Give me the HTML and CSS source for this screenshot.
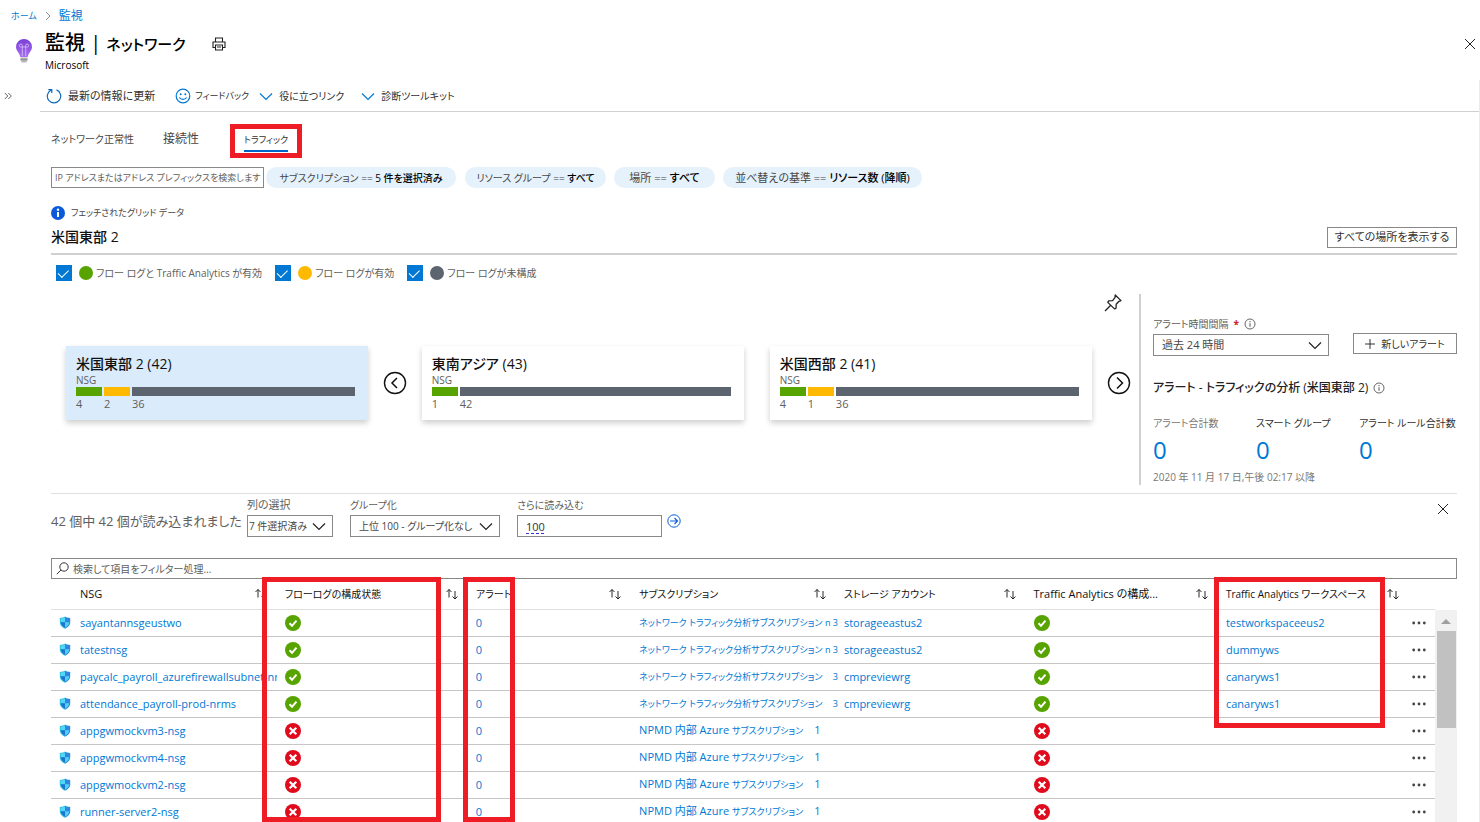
FILE: index.html
```html
<!DOCTYPE html>
<html lang="ja">
<head>
<meta charset="utf-8">
<title>監視 | ネットワーク</title>
<link rel="stylesheet" href="styles.css">
</head>
<body>
<svg class="defs" aria-hidden="true">
  <defs>
    <linearGradient id="bulb-fill" x1="0" y1="0" x2="0" y2="1"><stop offset="0" stop-color="#7a3fd6"/><stop offset="1" stop-color="#a76ff0"/></linearGradient>
    <symbol id="chevron" viewBox="0 0 14 14"><path d="M1 4.500l6 6 6-6" fill="none" stroke="currentColor" stroke-width="1.200"/></symbol>
    <symbol id="close" viewBox="0 0 12 12"><path d="M1 1l10 10M11 1L1 11" fill="none" stroke="currentColor" stroke-width="1"/></symbol>
    <symbol id="info" viewBox="0 0 12 12"><circle cx="6" cy="6" r="5" fill="none" stroke="currentColor" stroke-width=".9"/><path d="M6 5.200v3.600M6 3v1.200" stroke="currentColor" stroke-width="1"/></symbol>
    <symbol id="sort" viewBox="0 0 14 12"><path d="M4 9.500V1.500M1.500 4L4 1.500 6.500 4M10 3V11M7.500 8.500L10 11l2.500-2.500" fill="none" stroke="currentColor" stroke-width=".9"/></symbol>
    <symbol id="shield" viewBox="0 0 12 13"><path d="M6 .5C4.500 1.500 3 1.900.8 2v4.200C.8 9.500 3.500 11.500 6 12.800z" fill="#32bedd"/><path d="M6 .5C7.500 1.500 9 1.900 11.200 2v4.200c0 3.300-2.700 5.300-5.200 6.600z" fill="#2a8ce0"/><path d="M6 1.500C4.800 2.200 3.300 2.700 1.700 2.800v3.500H6z" fill="#50d8f6"/><path d="M6 6.300H1.700C1.800 9 4 10.600 6 11.700z" fill="#1c74d0"/><path d="M6 1.500c1.200.7 2.700 1.200 4.300 1.300v3.500H6z" fill="#2f86e4"/><path d="M6 6.300h4.300C10.200 9 8 10.600 6 11.700z" fill="#50d0f6"/></symbol>
    <symbol id="ok" viewBox="0 0 16 16"><circle cx="8" cy="8" r="8" fill="#57a300"/><path d="M4.500 8.300l2.500 2.500 4.500-5.200" fill="none" stroke="#fff" stroke-width="2"/></symbol>
    <symbol id="bad" viewBox="0 0 16 16"><circle cx="8" cy="8" r="8" fill="#e00b1c"/><path d="M4.700 4.700l6.600 6.600M11.300 4.700l-6.600 6.600" fill="none" stroke="#fff" stroke-width="2.200"/></symbol>
    <symbol id="dots" viewBox="0 0 14 4"><circle cx="1.700" cy="2" r="1.400"/><circle cx="7" cy="2" r="1.400"/><circle cx="12.300" cy="2" r="1.400"/></symbol>
  </defs>
</svg>
<div class="page">
  <nav class="crumbs"><a href="#">ホーム</a><svg width="6" height="10" viewBox="0 0 6 10"><path d="M1 1l4 4-4 4" fill="none" stroke="#888" stroke-width=".9"/></svg><a href="#">監視</a></nav>

  <header class="head">
    <svg width="18" height="26" viewBox="0 0 18 26"><path d="M9 1a8 8 0 0 0-8 8c0 4 3.500 5.500 4.300 10h7.400C13.500 14.500 17 13 17 9a8 8 0 0 0-8-8z" fill="url(#bulb-fill)"/><path d="M7.300 18V9M10.700 18V9M7.300 9H5.500a1.500 1.500 0 1 1 1.800-1.500V9h3.400V7.500A1.500 1.500 0 1 1 12.500 9h-1.800" fill="none" stroke="#d9c2f8" stroke-width=".8"/><path d="M5.500 19.500h7v3L11 24.500H7l-1.500-2z" fill="#b5b5b5"/><path d="M5.500 21.300h7" stroke="#8b8b8b"/></svg>
    <div class="head-text"><h1>監視 | <span>ネットワーク</span></h1><p>Microsoft</p></div>
    <button class="icon-btn print" aria-label="印刷"><svg width="14" height="14" viewBox="0 0 14 14"><path d="M3.500 5V1h7v4M3.500 10.500h-2.500V5h12v5.500h-2.500M3.500 8h7v5h-7zM5 10h4" fill="none" stroke="#222" stroke-width="1.100"/></svg></button>
    <button class="icon-btn close-page" aria-label="閉じる"><svg width="12" height="12"><use href="#close"/></svg></button>
  </header>

  <div class="body">
    <aside class="rail"><button class="icon-btn" aria-label="メニューを展開"><svg width="8" height="8" viewBox="0 0 8 8"><path d="M.8 1l3 3-3 3M4.300 1l3 3-3 3" fill="none" stroke="#555" stroke-width=".9"/></svg></button></aside>
    <main class="main">
      <div class="toolbar">
        <button><svg width="16" height="16" viewBox="0 0 16 16"><path d="M10.500 1.900a6.700 6.700 0 1 1-5.200.1M5.800 5V1.600H2.300" fill="none" stroke="#0f6cbd" stroke-width="1.200"/></svg><span>最新の情報に更新</span></button>
        <button class="feedback"><svg width="16" height="16" viewBox="0 0 16 16"><circle cx="8" cy="8" r="6.800" fill="none" stroke="#0078d4" stroke-width="1.200"/><circle cx="5.700" cy="6.200" r="1" fill="#0078d4"/><circle cx="10.300" cy="6.200" r="1" fill="#0078d4"/><path d="M4.300 9.500c1.700 2.500 5.700 2.500 7.400 0" fill="none" stroke="#0078d4" stroke-width="1.200"/></svg><span>フィードバック</span></button>
        <button class="links"><svg width="14" height="14"><use href="#chevron"/></svg><span>役に立つリンク</span></button>
        <button class="tools"><svg width="14" height="14"><use href="#chevron"/></svg><span>診断ツールキット</span></button>
      </div>

      <div class="content">
        <nav class="tabs"><a href="#">ネットワーク正常性</a><a href="#">接続性</a><a href="#" class="current"><span>トラフィック</span></a></nav>

        <div class="filters">
          <input class="ip" type="text" aria-label="IP 検索" placeholder="IP アドレスまたはアドレス プレフィックスを検索します">
          <button class="pill p1">サブスクリプション == <b>5 件を選択済み</b></button>
          <button class="pill p2">リソース グループ == <b>すべて</b></button>
          <button class="pill p3">場所 == <b>すべて</b></button>
          <button class="pill p4">並べ替えの基準 == <b>リソース数 (降順)</b></button>
        </div>

        <p class="notice"><svg width="14" height="14" viewBox="0 0 14 14"><circle cx="7" cy="7" r="7" fill="#0a5adb"/><path d="M7 6v5" stroke="#fff" stroke-width="2"/><circle cx="7" cy="3.800" r="1.200" fill="#fff"/></svg><span>フェッチされたグリッド データ</span></p>

        <div class="region"><h2>米国東部 2</h2><button class="outline">すべての場所を表示する</button></div>

        <div class="legend">
          <label><input type="checkbox" checked><i class="dot green"></i>フロー ログと Traffic Analytics が有効</label>
          <label><input type="checkbox" checked><i class="dot amber"></i>フロー ログが有効</label>
          <label><input type="checkbox" checked><i class="dot slate"></i>フロー ログが未構成</label>
        </div>

        <section class="overview">
          <div class="map">
            <button class="icon-btn pin" aria-label="ピン留め"><svg width="18" height="18" viewBox="0 0 18 18"><path d="M11.200 1l5.800 5.600-2 .7-2.800 3-.2 4-1.500.6-6.700-6.500.8-1.500 4-.3 2.500-3.200zM6.500 11.500L1 17" fill="none" stroke="#222" stroke-width="1.300" stroke-linejoin="round"/></svg></button>
            <div class="cards">
              <article class="card selected"><h3>米国東部 2 (42)</h3><p>NSG</p>
                <div class="bars"><div><i class="green"></i>4</div><div><i class="amber"></i>2</div><div class="rest"><i class="slate"></i>36</div></div></article>
              <button class="icon-btn prev" aria-label="前へ"><svg width="24" height="24" viewBox="0 0 24 24"><circle cx="12" cy="12" r="10.500" fill="none" stroke="#111" stroke-width="1.400"/><path d="M14 7l-5 5 5 5" fill="none" stroke="#111" stroke-width="1.500"/></svg></button>
              <article class="card"><h3>東南アジア (43)</h3><p>NSG</p>
                <div class="bars"><div><i class="green"></i>1</div><div class="rest"><i class="slate"></i>42</div></div></article>
              <article class="card"><h3>米国西部 2 (41)</h3><p>NSG</p>
                <div class="bars"><div><i class="green"></i>4</div><div><i class="amber"></i>1</div><div class="rest"><i class="slate"></i>36</div></div></article>
              <button class="icon-btn next" aria-label="次へ"><svg width="24" height="24" viewBox="0 0 24 24"><circle cx="12" cy="12" r="10.500" fill="none" stroke="#111" stroke-width="1.400"/><path d="M10 6.500l5.500 5.500-5.500 5.500" fill="none" stroke="#111" stroke-width="1.500"/></svg></button>
            </div>
          </div>
          <div class="alerts">
            <div class="alert-form">
              <div class="field interval"><label for="interval">アラート時間間隔 <em>*</em> <svg width="12" height="12"><use href="#info"/></svg></label>
                <span class="select"><select id="interval"><option>過去 24 時間</option></select><svg width="14" height="14"><use href="#chevron"/></svg></span></div>
              <button class="outline new-alert"><svg width="10" height="10" viewBox="0 0 10 10"><path d="M5 0v10M0 5h10" stroke="#333" stroke-width="1"/></svg>新しいアラート</button>
            </div>
            <h3>アラート - トラフィックの分析 (米国東部 2) <svg width="12" height="12"><use href="#info"/></svg></h3>
            <dl class="counts"><div><dt class="muted">アラート合計数</dt><dd>0</dd></div><div><dt>スマート グループ</dt><dd>0</dd></div><div><dt>アラート ルール合計数</dt><dd>0</dd></div></dl>
            <p class="since">2020 年 11 月 17 日,午後 02:17 以降</p>
          </div>
        </section>

        <section class="grid-tools">
          <p class="loaded">42 個中 42 個が読み込まれました</p>
          <div class="field f-cols"><label for="cols">列の選択</label><span class="select"><select id="cols"><option>7 件選択済み</option></select><svg width="14" height="14"><use href="#chevron"/></svg></span></div>
          <div class="field f-group"><label for="group">グループ化</label><span class="select"><select id="group"><option>上位 100 - グループ化なし</option></select><svg width="14" height="14"><use href="#chevron"/></svg></span></div>
          <div class="field f-more"><label for="more">さらに読み込む</label><input id="more" type="text" value="100"></div>
          <button class="icon-btn go" aria-label="読み込む"><svg width="14" height="14" viewBox="0 0 14 14"><circle cx="7" cy="7" r="6.200" fill="none" stroke="#0b5fd8" stroke-width="1"/><path d="M3 7h7.500M7.500 4l3 3-3 3" fill="none" stroke="#0b5fd8" stroke-width="1.200"/></svg></button>
          <button class="icon-btn close-grid" aria-label="閉じる"><svg width="12" height="12"><use href="#close"/></svg></button>
        </section>

        <label class="search"><svg width="13" height="13" viewBox="0 0 13 13"><circle cx="8" cy="5" r="4.200" fill="none" stroke="#333"/><path d="M5 8L.8 12.200" stroke="#333"/></svg><input type="search" aria-label="フィルター" placeholder="検索して項目をフィルター処理..."></label>

        <div class="grid">
          <div class="table-wrap">
          <table>
            <colgroup><col class="c-icon"><col class="c-nsg"><col class="c-flow"><col class="c-alert"><col class="c-sub"><col class="c-store"><col class="c-ta"><col class="c-ws"><col class="c-more"></colgroup>
            <thead><tr>
              <th></th>
              <th><div class="th latin">NSG<svg width="14" height="12"><use href="#sort"/></svg></div></th>
              <th><div class="th">フローログの構成状態<svg width="14" height="12"><use href="#sort"/></svg></div></th>
              <th><div class="th">アラート<svg width="14" height="12"><use href="#sort"/></svg></div></th>
              <th><div class="th">サブスクリプション<svg width="14" height="12"><use href="#sort"/></svg></div></th>
              <th><div class="th">ストレージ アカウント<svg width="14" height="12"><use href="#sort"/></svg></div></th>
              <th><div class="th latin">Traffic Analytics の構成...<svg width="14" height="12"><use href="#sort"/></svg></div></th>
              <th><div class="th last">Traffic Analytics ワークスペース<svg width="14" height="12"><use href="#sort"/></svg></div></th>
              <th></th>
            </tr></thead>
            <tbody>
              <tr><td class="ic"><svg width="12" height="13"><use href="#shield"/></svg></td><td><a href="#">sayantannsgeustwo</a></td><td><svg width="16" height="16"><use href="#ok"/></svg></td><td><a href="#">0</a></td><td><div class="sub"><a href="#">ネットワーク トラフィック分析サブスクリプション</a><span class="tail">n 3</span></div></td><td><a href="#">storageeastus2</a></td><td><svg width="16" height="16"><use href="#ok"/></svg></td><td><a href="#">testworkspaceeus2</a></td><td><button class="icon-btn" aria-label="その他"><svg width="14" height="4"><use href="#dots"/></svg></button></td></tr>
              <tr><td class="ic"><svg width="12" height="13"><use href="#shield"/></svg></td><td><a href="#">tatestnsg</a></td><td><svg width="16" height="16"><use href="#ok"/></svg></td><td><a href="#">0</a></td><td><div class="sub"><a href="#">ネットワーク トラフィック分析サブスクリプション</a><span class="tail">n 3</span></div></td><td><a href="#">storageeastus2</a></td><td><svg width="16" height="16"><use href="#ok"/></svg></td><td><a href="#">dummyws</a></td><td><button class="icon-btn" aria-label="その他"><svg width="14" height="4"><use href="#dots"/></svg></button></td></tr>
              <tr><td class="ic"><svg width="12" height="13"><use href="#shield"/></svg></td><td><a href="#">paycalc_payroll_azurefirewallsubnet-nrms</a></td><td><svg width="16" height="16"><use href="#ok"/></svg></td><td><a href="#">0</a></td><td><div class="sub"><a href="#">ネットワーク トラフィック分析サブスクリプション</a><span class="tail">3</span></div></td><td><a href="#">cmpreviewrg</a></td><td><svg width="16" height="16"><use href="#ok"/></svg></td><td><a href="#">canaryws1</a></td><td><button class="icon-btn" aria-label="その他"><svg width="14" height="4"><use href="#dots"/></svg></button></td></tr>
              <tr><td class="ic"><svg width="12" height="13"><use href="#shield"/></svg></td><td><a href="#">attendance_payroll-prod-nrms</a></td><td><svg width="16" height="16"><use href="#ok"/></svg></td><td><a href="#">0</a></td><td><div class="sub"><a href="#">ネットワーク トラフィック分析サブスクリプション</a><span class="tail">3</span></div></td><td><a href="#">cmpreviewrg</a></td><td><svg width="16" height="16"><use href="#ok"/></svg></td><td><a href="#">canaryws1</a></td><td><button class="icon-btn" aria-label="その他"><svg width="14" height="4"><use href="#dots"/></svg></button></td></tr>
              <tr><td class="ic"><svg width="12" height="13"><use href="#shield"/></svg></td><td><a href="#">appgwmockvm3-nsg</a></td><td><svg width="16" height="16"><use href="#bad"/></svg></td><td><a href="#">0</a></td><td><div class="sub npmd"><a href="#">NPMD 内部 Azure <small>サブスクリプション</small></a><span>1</span></div></td><td></td><td><svg width="16" height="16"><use href="#bad"/></svg></td><td></td><td><button class="icon-btn" aria-label="その他"><svg width="14" height="4"><use href="#dots"/></svg></button></td></tr>
              <tr><td class="ic"><svg width="12" height="13"><use href="#shield"/></svg></td><td><a href="#">appgwmockvm4-nsg</a></td><td><svg width="16" height="16"><use href="#bad"/></svg></td><td><a href="#">0</a></td><td><div class="sub npmd"><a href="#">NPMD 内部 Azure <small>サブスクリプション</small></a><span>1</span></div></td><td></td><td><svg width="16" height="16"><use href="#bad"/></svg></td><td></td><td><button class="icon-btn" aria-label="その他"><svg width="14" height="4"><use href="#dots"/></svg></button></td></tr>
              <tr><td class="ic"><svg width="12" height="13"><use href="#shield"/></svg></td><td><a href="#">appgwmockvm2-nsg</a></td><td><svg width="16" height="16"><use href="#bad"/></svg></td><td><a href="#">0</a></td><td><div class="sub npmd"><a href="#">NPMD 内部 Azure <small>サブスクリプション</small></a><span>1</span></div></td><td></td><td><svg width="16" height="16"><use href="#bad"/></svg></td><td></td><td><button class="icon-btn" aria-label="その他"><svg width="14" height="4"><use href="#dots"/></svg></button></td></tr>
              <tr><td class="ic"><svg width="12" height="13"><use href="#shield"/></svg></td><td><a href="#">runner-server2-nsg</a></td><td><svg width="16" height="16"><use href="#bad"/></svg></td><td><a href="#">0</a></td><td><div class="sub npmd"><a href="#">NPMD 内部 Azure <small>サブスクリプション</small></a><span>1</span></div></td><td></td><td><svg width="16" height="16"><use href="#bad"/></svg></td><td></td><td><button class="icon-btn" aria-label="その他"><svg width="14" height="4"><use href="#dots"/></svg></button></td></tr>
            </tbody>
          </table>
          </div>
          <div class="scroll"><svg width="22" height="21" viewBox="0 0 22 21"><path d="M6 14l5-5 5 5z" fill="#a0a0a0"/></svg><i></i></div>
          <div class="mark m-flow"></div><div class="mark m-alert"></div><div class="mark m-ws"></div>
        </div>
      </div>
    </main>
  </div>
</div>
</body>
</html>
```
FILE: styles.css
```css
* { box-sizing: border-box; }
body, h1, h2, h3, p, dl, dd { margin: 0; }
body {
  font: 12px/16px "Open Sans", "Noto Sans CJK JP", sans-serif;
  font-feature-settings: "palt";
  color: #323130;
  background: #fff;
}
button, input, select { font: inherit; font-feature-settings: inherit; color: inherit; border-radius: 0; margin: 0; }
button { background: none; border: 0; padding: 0; }
a { color: #0078d4; text-decoration: none; }
svg { flex: none; display: block; }
.defs { position: absolute; width: 0; height: 0; }
.page { height: 100vh; display: flex; flex-direction: column; overflow: hidden; }
.icon-btn { display: flex; align-items: center; justify-content: center; color: #222; }

.crumbs { display: flex; align-items: center; gap: 8px; padding: 8px 11px 0; white-space: nowrap; font-size: 12px; }
.crumbs a:first-child { font-size: 9px; }
.head { display: flex; align-items: flex-start; padding: 6px 4px 0 15px; height: 56px; }
.head > svg { margin-top: 8px; }
.head-text { margin-left: 12px; color: #000; }
.head h1 { font-size: 20px; line-height: 26px; font-weight: 500; white-space: nowrap; }
.head h1 span { font-size: 15px; }
.head p { font-size: 10px; line-height: 16px; }
.print { margin: 7px 0 0 26px; }
.close-page { margin: 8px 0 0 auto; }

.body { flex: 1; min-height: 0; display: flex; }
.rail { width: 40px; padding: 12px 0 0 4px; }
.main { flex: 1; min-width: 0; display: flex; flex-direction: column; border-right: 1px solid #eaeaea; }
.toolbar { display: flex; align-items: center; height: 32px; padding-left: 6px; border-bottom: 1px solid #d2d0ce; }
.toolbar button { display: flex; align-items: center; gap: 6px; font-size: 11px; white-space: nowrap; }
.toolbar svg { color: #0078d4; }
.toolbar .feedback { margin-left: 20px; gap: 4px; font-size: 9px; }
.toolbar .links { margin-left: 10px; font-size: 10px; }
.toolbar .tools { margin-left: 17px; font-size: 10px; }
.content { flex: 1; min-height: 0; display: flex; flex-direction: column; padding: 12px 22px 0 11px; }

.tabs { display: flex; align-items: center; height: 34px; }
.tabs a { color: #484644; font-size: 12px; white-space: nowrap; padding-bottom: 4px; }
.tabs a:first-child { width: 112px; font-size: 10px; }
.tabs a:nth-child(2) { width: 67px; }
.tabs .current { display: flex; align-items: center; justify-content: center; width: 72px; height: 34px; padding: 0; border: 5px solid #ee1c25; font-size: 9px; color: #323130; }
.tabs .current span { border-bottom: 2px solid #0067c8; line-height: 20px; }

.filters { display: flex; align-items: center; margin-top: 9px; height: 21px; }
.ip { width: 213px; height: 21px; border: 1px solid #8a8886; padding: 0 0 0 3px; font-size: 9px; }
::placeholder { color: #605e5c; opacity: 1; }
.pill { height: 21px; border-radius: 11px; background: #e5f1fb; color: #484644; white-space: nowrap; font-size: 10px; }
.pill b { color: #000; font-weight: 500; }
.p1 { width: 190px; margin-left: 2px; }
.p2 { width: 141px; margin-left: 9px; }
.p3 { width: 101px; margin-left: 8px; font-size: 11px; }
.p4 { width: 199px; margin-left: 8px; font-size: 11px; }

.notice { display: flex; align-items: center; gap: 6px; margin-top: 17px; font-size: 9px; color: #484644; }
.region { display: flex; align-items: center; justify-content: space-between; height: 34px; border-bottom: 2px solid #d2d0ce; }
.region h2 { font-size: 14px; line-height: 20px; font-weight: 500; color: #111; }
.outline { display: flex; align-items: center; justify-content: center; gap: 6px; height: 21px; border: 1px solid #8a8886; white-space: nowrap; }
.region .outline { width: 130px; font-size: 11px; }

.legend { display: flex; align-items: center; gap: 13px; padding: 8px 5px 0; height: 28px; color: #605e5c; font-size: 10px; }
.legend label { display: flex; align-items: center; white-space: nowrap; }
.legend input { appearance: none; width: 16px; height: 16px; margin: 0; background: #0078d4; display: grid; place-items: center; }
.legend input::after { content: ""; width: 9px; height: 5px; border: solid #fff; border-width: 0 0 1px 1px; transform: rotate(-45deg) translateY(-1px); }
.dot { width: 14px; height: 14px; border-radius: 50%; margin: 0 3px 0 7px; }
.green { background: #57a300; }
.amber { background: #ffb900; }
.slate { background: #5c6470; }

.overview { display: flex; margin-top: 11px; padding-bottom: 8px; border-bottom: 1px solid #e1dfdd; }
.map { flex: 1; min-width: 0; }
.pin { margin: 0 17px 0 auto; }
.cards { display: flex; align-items: center; padding: 34px 8px 0 15px; }
.card { flex: 322 1 0; min-width: 0; height: 74px; padding: 8px 13px 0 10px; background: #fff; box-shadow: 0 3px 6px rgba(0, 0, 0, .2); color: #605e5c; font-size: 11px; }
.card.selected { flex-grow: 300; background: #daebfc; }
.card + .card { margin-left: 26px; }
.card h3 { font-size: 14px; line-height: 20px; font-weight: 500; color: #111; }
.card p { line-height: 13px; font-size: 10px; }
.prev { width: 54px; }
.next { margin-left: 15px; }
.bars { display: flex; gap: 2px; }
.bars div { width: 26px; line-height: 16px; }
.bars i { display: block; height: 9px; }
.bars .rest { flex: 1; }

.alerts { width: 318px; border-left: 2px solid #d2d0ce; padding: 22px 0 0 12px; height: 191px; white-space: nowrap; }
.alert-form { display: flex; justify-content: space-between; align-items: flex-end; }
.field label { display: flex; align-items: center; gap: 5px; font-size: 11px; line-height: 16px; color: #605e5c; }
.field em { color: #c4262e; font-style: normal; font-weight: 700; }
.field svg { color: #555; }
.interval { width: 176px; }
.interval label { font-size: 10px; margin-bottom: 2px; }
.select { display: grid; align-items: center; }
.select select, .select svg { grid-area: 1 / 1; }
.select svg { justify-self: end; margin-right: 7px; color: #222; pointer-events: none; }
select { appearance: none; width: 100%; height: 22px; border: 1px solid #8a8886; background: #fff; padding: 0 8px; font-size: 11px; color: #484644; }
.new-alert { width: 104px; font-size: 10px; margin-bottom: 2px; }
.alerts h3 { display: flex; align-items: center; gap: 5px; margin-top: 22px; font-size: 12px; line-height: 20px; font-weight: 500; color: #222; }
.alerts h3 svg { color: #555; }
.counts { display: flex; margin-top: 16px; }
.counts div { width: 103px; flex: none; }
.counts dt { font-size: 10px; line-height: 18px; }
.counts .muted { color: #797775; }
.counts dd { font-size: 24px; line-height: 36px; color: #0078d4; }
.since { font-size: 10px; line-height: 18px; color: #797775; }

.grid-tools { display: flex; align-items: flex-start; padding-top: 3px; height: 64px; white-space: nowrap; }
.loaded { width: 196px; font-size: 13px; line-height: 20px; margin-top: 14px; color: #605e5c; }
.field label + .select, .field label + input { margin-top: 2px; }
.f-cols { width: 86px; }
.f-cols select { padding: 0 0 0 1px; font-size: 10px; }
.f-group { width: 150px; margin-left: 17px; }
.f-group label, .f-more label { font-size: 10px; }
.f-group select { font-size: 10px; }
.f-more { width: 145px; margin-left: 17px; }
.f-more input { display: block; width: 100%; height: 22px; border: 1px solid #8a8886; padding: 0 8px; font-size: 11px; text-decoration: underline dashed #3b2fe0; text-underline-offset: 2px; }
.go { margin: 17px 0 0 5px; }
.close-grid { margin: 6px 8px 0 auto; }

.search { display: flex; align-items: center; gap: 4px; flex: none; height: 21px; border: 1px solid #8a8886; padding: 0 4px; }
.search input { flex: 1; border: 0; outline: 0; padding: 0; background: none; appearance: none; font-size: 10px; height: 18px; }

.grid { position: relative; flex: 1; min-height: 0; display: flex; }
.table-wrap { flex: 1; min-width: 0; overflow: hidden; }
table { width: 100%; table-layout: fixed; border-collapse: collapse; font-size: 11px; }
.c-icon { width: 29px; }
.c-nsg, .c-sub { width: 14.8%; }
.c-flow { width: 13.8%; }
.c-alert { width: 11.8%; }
.c-store { width: 13.7%; }
.c-ta { width: 13.9%; }
.c-more { width: 35px; }
th, td { padding: 0; text-align: left; font-weight: 400; white-space: nowrap; }
th { height: 30px; border-bottom: 1px solid #e1dfdd; color: #111; font-size: 10px; }
.th { display: flex; align-items: center; justify-content: space-between; padding-right: 17px; }
.th.latin { font-size: 11px; }
.th.last { padding-right: 0; }
td { height: 27px; border-bottom: 1px solid #c8c6c4; overflow: hidden; }
td.ic { padding-left: 8px; }
td a { display: block; margin-right: 8px; overflow: hidden; }
td .icon-btn { margin-left: 12px; color: #444; fill: #444; }
.sub { display: flex; justify-content: space-between; padding-right: 6px; color: #0078d4; font-size: 9px; }
.sub a { margin: 0; overflow: visible; }
.npmd { justify-content: flex-start; gap: 11px; font-size: 11px; }
.npmd small { font-size: 9px; }
.scroll { width: 22px; margin-top: 31px; background: #f1f1f1; }
.scroll i { display: block; width: 19px; height: 97px; margin-left: 2px; background: #c1c1c1; }
.mark { position: absolute; border: 5px solid #ee1c25; top: -2px; pointer-events: none; }
.m-flow { left: 15%; width: 179px; bottom: 0; }
.m-alert { left: 29.3%; width: 52px; bottom: 0; }
.m-ws { left: 82.7%; width: 171px; height: 151px; }
```
